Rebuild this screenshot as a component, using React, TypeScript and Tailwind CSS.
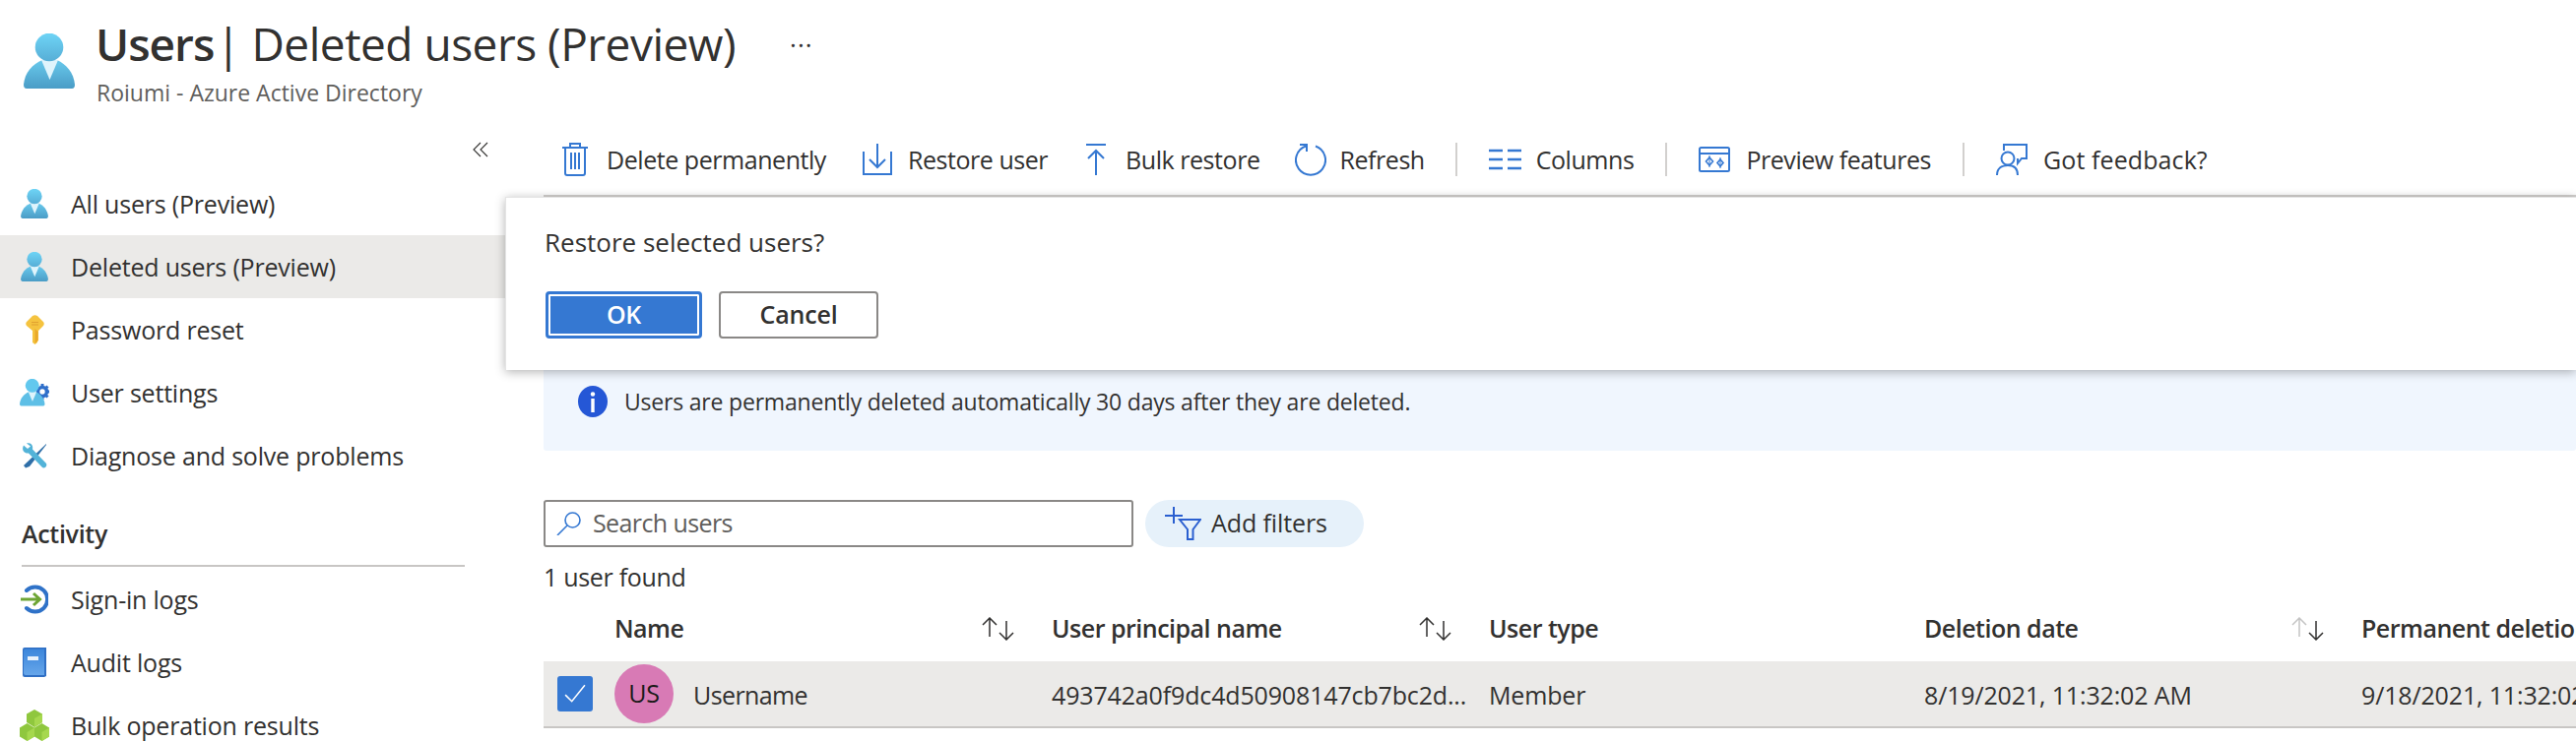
import type { ReactNode } from 'react';

const BLUE = '#3578d2';

function UserGlyph({ id, className }: { id: string; className: string }) {
  return (
    <svg viewBox="0 0 52 56" className={className}>
      <defs>
        <linearGradient id={`${id}-head`} x1="0" y1="0" x2="0" y2="1">
          <stop offset="0" stopColor="#6ed4f6" />
          <stop offset="1" stopColor="#57aed6" />
        </linearGradient>
        <linearGradient id={`${id}-body`} x1="0" y1="0" x2="0" y2="1">
          <stop offset="0" stopColor="#68c9ec" />
          <stop offset="1" stopColor="#4a9cc6" />
        </linearGradient>
      </defs>
      <path d="M3 56 Q0 56 0 52 C1 40 9 31 19 27 L34 27 C43 31 51 40 52 52 Q52 56 49 56Z" fill={`url(#${id}-body)`} />
      <path d="M18 27 L35 27 L26.5 47Z" fill="#dff4fc" />
      <circle cx="26" cy="14" r="14.3" fill={`url(#${id}-head)`} />
    </svg>
  );
}

function KeyIcon() {
  return (
    <svg viewBox="0 0 19 30" className="h-[30px] w-[19px]">
      <path d="M7 1 Q9.5 -0.5 12 1 L18 7 Q19.5 9 18 11 L13 16 L13 26 L12 27 L12 28 L9.5 30 L7 28 L7 16 L1 11 Q-0.5 9 1 7Z" fill="#f5c33f" />
      <path d="M9.5 14 L12.5 17 L12.5 26 L9.5 29Z" fill="#e9a82b" />
      <path d="M6 7.5 H13 M6 10 H13" stroke="#e0a030" strokeWidth="1.2" />
    </svg>
  );
}

function UserPaths() {
  return (
    <>
      <path d="M3 56 Q0 56 0 52 C1 40 9 31 19 27 L34 27 C43 31 51 40 52 52 Q52 56 49 56Z" fill="#5ebfe6" />
      <path d="M18 27 L35 27 L26.5 47Z" fill="#dff4fc" />
      <circle cx="26" cy="14" r="14.3" fill="#62c8ee" />
    </>
  );
}

function UserSettingsIcon() {
  return (
    <svg viewBox="0 0 30 28" className="h-[28px] w-[30px]">
      <circle cx="23" cy="13" r="4.5" fill="none" stroke="#2f6fca" strokeWidth="3.6" />
      <path d="M23 5 V7 M23 19 V21 M28.5 7.5 L27 9 M27 17 L28.5 18.5 M29 13 H30" stroke="#2f6fca" strokeWidth="3" />
      <g transform="scale(0.49)">
        <UserPaths />
      </g>
    </svg>
  );
}

function ToolsIcon() {
  return (
    <svg viewBox="0 0 26 26" className="h-[26px] w-[26px]">
      <path d="M25 1 L2 23 L4 25.5 L8 24 L25 2Z" fill="#2f6fa8" />
      <path d="M2 2.5 L6 6 L9 3.5 L5 0.5 C9 -0.5 12 2 11 6.5 L25 21 Q26 23.5 24 25 Q22 26 20.5 24.5 L7 10.5 C2.5 11 -0.5 7 2 2.5Z" fill="#53b3d8" />
    </svg>
  );
}

function SignInIcon() {
  return (
    <svg viewBox="0 0 28 30" className="h-[30px] w-[28px]">
      <path d="M6 6 A12.5 12.5 0 1 1 6 24" fill="none" stroke="#2f72c8" strokeWidth="4" strokeLinecap="round" />
      <path d="M0 15 H19 M13 9 L19.5 15 L13 21" fill="none" stroke="#6da534" strokeWidth="3" />
    </svg>
  );
}

function BookIcon() {
  return (
    <svg viewBox="0 0 24 30" className="h-[30px] w-[24px]">
      <defs>
        <linearGradient id="book" x1="0" y1="0" x2="0" y2="1">
          <stop offset="0" stopColor="#3c86db" />
          <stop offset="1" stopColor="#66a6ea" />
        </linearGradient>
      </defs>
      <path d="M2 0 H24 V29 L22 30 H2 Q0 30 0 28 V2 Q0 0 2 0Z" fill="#2f6fc4" />
      <path d="M3 1.5 H22 V28 H3 Q1 28 1 26 V3 Q1 1.5 3 1.5Z" fill="url(#book)" />
      <rect x="5" y="9" width="11" height="4" fill="#e8f1fb" />
    </svg>
  );
}

function CubesIcon() {
  return (
    <svg viewBox="0 0 30 32" className="h-[32px] w-[30px]">
      <path d="M15 0 L23 4.5 V13 L15 18 L7 13 V4.5Z" fill="#8fc73e" />
      <path d="M15 9 L23 4.5 V13 L15 18Z" fill="#a6d84e" />
      <path d="M7.5 14 L15 18.5 V27.5 L7.5 32 L0 27.5 V18.5Z" fill="#8fc73e" />
      <path d="M7.5 23 L15 18.5 V27.5 L7.5 32Z" fill="#a6d84e" />
      <path d="M22.5 14 L30 18.5 V27.5 L22.5 32 L15 27.5 V18.5Z" fill="#8fc73e" />
      <path d="M22.5 23 L30 18.5 V27.5 L22.5 32Z" fill="#a6d84e" />
    </svg>
  );
}

function TrashIcon() {
  return (
    <svg viewBox="0 0 26 34" className="h-[34px] w-[26px]" fill="none" stroke={BLUE} strokeWidth="2">
      <path d="M0 5 H26 M8 5 V1 H18 V5 M3 5 V31 Q3 33 5 33 H21 Q23 33 23 31 V5" />
      <path d="M9 10 V27 M13 10 V27 M17 10 V27" />
    </svg>
  );
}

function RestoreIcon() {
  return (
    <svg viewBox="0 0 30 32" className="h-[32px] w-[30px]" fill="none" stroke={BLUE} strokeWidth="2">
      <path d="M1 8 V31 H29 V8 M15 0 V24 M7 16 L15 24 L23 16" />
    </svg>
  );
}

function BulkIcon() {
  return (
    <svg viewBox="0 0 20 32" className="h-[32px] w-[20px]" fill="none" stroke={BLUE} strokeWidth="2">
      <path d="M0 1 H20 M10 32 V7 M2 15 L10 7 L18 15" />
    </svg>
  );
}

function RefreshIcon() {
  return (
    <svg viewBox="0 0 32 34" className="h-[34px] w-[32px]" fill="none" stroke={BLUE} strokeWidth="2">
      <path d="M11 3.5 A15 15 0 1 0 21 3.5" />
      <path d="M5 2 H12 V9" />
    </svg>
  );
}

function ColumnsIcon() {
  return (
    <svg viewBox="0 0 33 22" className="h-[22px] w-[33px]" fill="none" stroke={BLUE} strokeWidth="2.4">
      <path d="M0 2 H14 M19 2 H33 M0 11 H14 M19 11 H33 M0 20 H14 M19 20 H33" />
    </svg>
  );
}

function PreviewIcon() {
  return (
    <svg viewBox="0 0 32 26" className="h-[26px] w-[32px]" fill="none" stroke={BLUE} strokeWidth="2">
      <rect x="1" y="1" width="30" height="24" rx="1.5" />
      <path d="M1 7 H31" />
      <path d="M11 11 L14.5 15 L11 19 L7.5 15Z M22 13 L25 16.5 L22 20 L19 16.5Z" strokeWidth="1.6" />
      <path d="M11 9 V21 M22 11 V22" strokeWidth="1" />
    </svg>
  );
}

function FeedbackIcon() {
  return (
    <svg viewBox="0 0 32 32" className="h-[32px] w-[32px]" fill="none" stroke={BLUE} strokeWidth="2">
      <path d="M8 7 V1 H31 V15 H26 L22 20 V15" />
      <circle cx="12" cy="15" r="6.5" />
      <path d="M1 32 C1 25 6 22 12 22 C18 22 22 25 22 32" />
    </svg>
  );
}

function InfoIcon() {
  return (
    <svg viewBox="0 0 30 32" className="h-[32px] w-[30px]">
      <ellipse cx="15" cy="16" rx="15" ry="16" fill="#2557d6" />
      <circle cx="15" cy="8.5" r="2.2" fill="#fff" />
      <rect x="13.3" y="13" width="3.4" height="14" fill="#fff" />
    </svg>
  );
}

function SearchIcon() {
  return (
    <svg viewBox="0 0 26 24" className="h-[24px] w-[26px]" fill="none" stroke={BLUE} strokeWidth="1.6">
      <circle cx="16.5" cy="8.5" r="7.5" />
      <path d="M11 14 L1 24" />
    </svg>
  );
}

function AddFilterIcon() {
  return (
    <svg viewBox="0 0 37 34" className="h-[34px] w-[37px]" fill="none" stroke="#2a5fd0" strokeWidth="2">
      <path d="M9 0 V17 M0 9 H18" />
      <path d="M15 13 H36 L28.5 23 V33 H23 V23Z" />
    </svg>
  );
}

function SortArrows({ faded }: { faded?: boolean }) {
  return (
    <svg viewBox="0 0 33 24" className="h-[24px] w-[33px]" fill="none" stroke="#323130" strokeWidth="1.5">
      <path d="M8 1 V20 M1 8 L8 1 L15 8" stroke={faded ? '#c4c4c4' : '#323130'} />
      <path d="M25 4 V23 M18 16 L25 23 L32 16" />
    </svg>
  );
}

function NavItem({ icon, label, active }: { icon: ReactNode; label: string; active?: boolean }) {
  return (
    <div className={`flex h-[64px] items-center ${active ? 'bg-[#ebeae8]' : ''}`}>
      <span className="flex w-[72px] shrink-0 justify-center pr-[2px]">{icon}</span>
      <span className="whitespace-nowrap pt-[2px] tracking-[-0.2px]">{label}</span>
    </div>
  );
}

function ToolButton({ icon, label, gap, left }: { icon: ReactNode; label: string; gap: string; left: string }) {
  return (
    <div className={`flex items-center whitespace-nowrap ${left}`}>
      {icon}
      <span className={`pt-[2px] ${gap}`}>{label}</span>
    </div>
  );
}

function Separator({ left }: { left: string }) {
  return <div className={`h-[34px] w-[2px] bg-[#d2d0ce] ${left}`} />;
}

export default function App() {
  return (
    <div className="relative h-[754px] w-[2616px] overflow-hidden bg-white font-['Open_Sans',sans-serif] text-[25px] tracking-[-0.3px] text-[#323130]">
      {/* Page header */}
      <div className="flex h-[120px]">
        <div className="ml-[24px] mt-[34px]">
          <UserGlyph id="page" className="h-[56px] w-[52px]" />
        </div>
        <div className="ml-[22px] mt-[9px]">
          <div className="-ml-[1px] whitespace-nowrap text-[46px] leading-[70px] tracking-[-0.5px]">
            <span className="font-semibold tracking-[-1px] [word-spacing:-9px]">Users </span>| Deleted users (Preview)
          </div>
          <div className="mt-[1px] text-[23px] leading-[28px] tracking-normal text-[#605e5c]">Roiumi - Azure Active Directory</div>
        </div>
        <div className="ml-[55px] mt-[30px] text-[26px] leading-[30px] tracking-[1px]">···</div>
      </div>

      <div className="flex">
        {/* Sidebar */}
        <div className="w-[513px] shrink-0">
          <div className="flex h-[55px] justify-end pr-[17px] pt-[24px]">
            <svg viewBox="0 0 16 16" className="h-[16px] w-[16px]" fill="none" stroke="#323130" strokeWidth="1.1">
              <path d="M8 1 L1 8 L8 15 M15 1 L8 8 L15 15" />
            </svg>
          </div>
          <NavItem icon={<UserGlyph id="nav-all" className="h-[30px] w-[28px]" />} label="All users (Preview)" />
          <NavItem icon={<UserGlyph id="nav-del" className="h-[30px] w-[28px]" />} label="Deleted users (Preview)" active />
          <NavItem icon={<KeyIcon />} label="Password reset" />
          <NavItem icon={<UserSettingsIcon />} label="User settings" />
          <NavItem icon={<ToolsIcon />} label="Diagnose and solve problems" />
          <div className="ml-[22px] mr-[41px] mt-[27px] border-b-2 border-[#c8c6c4] pb-[12px] font-semibold leading-[40px]">Activity</div>
          <div className="mt-[1px]">
            <NavItem icon={<SignInIcon />} label="Sign-in logs" />
            <NavItem icon={<BookIcon />} label="Audit logs" />
            <NavItem icon={<CubesIcon />} label="Bulk operation results" />
          </div>
        </div>

        {/* Main content */}
        <div className="min-w-0 flex-1 pl-[39px]">
          <div className="flex h-[78px] items-center pt-[6px] tracking-[-0.45px]">
            <ToolButton icon={<TrashIcon />} label="Delete permanently" gap="ml-[19px]" left="ml-[19px]" />
            <ToolButton icon={<RestoreIcon />} label="Restore user" gap="ml-[16px]" left="ml-[37px]" />
            <ToolButton icon={<BulkIcon />} label="Bulk restore" gap="ml-[20px]" left="ml-[39px]" />
            <ToolButton icon={<RefreshIcon />} label="Refresh" gap="ml-[14px]" left="ml-[35px]" />
            <Separator left="ml-[31px]" />
            <ToolButton icon={<ColumnsIcon />} label="Columns" gap="ml-[15px]" left="ml-[32px]" />
            <Separator left="ml-[32px]" />
            <ToolButton icon={<PreviewIcon />} label="Preview features" gap="ml-[16px]" left="ml-[32px]" />
            <Separator left="ml-[32px]" />
            <ToolButton icon={<FeedbackIcon />} label="Got feedback?" gap="ml-[16px] tracking-[0.1px]" left="ml-[32px]" />
          </div>
          <div className="h-[4px] bg-[#d2d0ce]" />

          {/* Info banner, mostly behind the confirmation */}
          <div className="mt-[20px] flex h-[236px] items-end rounded-[3px] bg-[#f0f6fe] pb-[34px] pl-[35px]">
            <InfoIcon />
            <span className="ml-[17px] text-[23px] leading-[32px] tracking-[-0.2px]">Users are permanently deleted automatically 30 days after they are deleted.</span>
          </div>

          {/* Search and filters */}
          <div className="mt-[50px] flex h-[48px] gap-[12px]">
            <div className="flex w-[599px] items-center rounded-[3px] border-2 border-[#8a8886] pl-[11px] text-[#605e5c]">
              <SearchIcon />
              <span className="ml-[11px] tracking-[-0.6px]">Search users</span>
            </div>
            <div className="flex w-[222px] items-center rounded-full bg-[#e6f1fa] pl-[20px]">
              <AddFilterIcon />
              <span className="ml-[10px] tracking-[-0.1px]">Add filters</span>
            </div>
          </div>
          <div className="mt-[13px] leading-[34px]">1 user found</div>

          {/* Users table */}
          <div className="mt-[3px] grid h-[66px] grid-cols-[72px_444px_444px_442px_444px_1fr] items-center whitespace-nowrap font-semibold tracking-[-0.5px]">
            <div />
            <div className="flex items-center justify-between pr-[38px]">
              Name
              <SortArrows />
            </div>
            <div className="flex items-center justify-between pr-[38px]">
              User principal name
              <SortArrows />
            </div>
            <div>User type</div>
            <div className="flex items-center justify-between pr-[38px]">
              Deletion date
              <SortArrows faded />
            </div>
            <div>Permanent deletion date</div>
          </div>
          <div className="grid h-[68px] grid-cols-[72px_444px_444px_442px_444px_1fr] items-center whitespace-nowrap border-b-2 border-[#c8c6c4] bg-[#ebeae8] tracking-[-0.15px]">
            <div className="pl-[14px]">
              <div className="flex h-[36px] w-[36px] items-center justify-center rounded-[3px] bg-[#3578d2]">
                <svg viewBox="0 0 20 20" className="h-[22px] w-[22px]" fill="none" stroke="#fff" strokeWidth="1.4">
                  <path d="M1 11 L7 17 L19 2" />
                </svg>
              </div>
            </div>
            <div className="flex items-center">
              <div className="flex h-[60px] w-[60px] items-center justify-center rounded-full bg-[#d87ab5] text-[#1b1a19]">US</div>
              <span className="ml-[20px] pt-[3px] tracking-[-0.6px]">Username</span>
            </div>
            <div className="pt-[3px]">493742a0f9dc4d50908147cb7bc2d...</div>
            <div className="pt-[3px]">Member</div>
            <div className="pt-[3px]">8/19/2021, 11:32:02 AM</div>
            <div className="pt-[3px]">9/18/2021, 11:32:02 AM</div>
          </div>
        </div>
      </div>

      {/* Confirmation popup over the page */}
      <div className="absolute left-[513px] right-0 top-[200px] h-[176px] border-l border-t border-[#e4e4e4] bg-white pl-[39px] pt-[27px] shadow-[0_2px_10px_rgba(0,0,0,0.3)]">
        <div className="text-[26px] leading-[36px] tracking-normal">Restore selected users?</div>
        <div className="ml-[1px] mt-[32px] flex gap-[17px] font-semibold tracking-[-0.2px]">
          <button className="h-[48px] w-[159px] rounded-[4px] border-[3px] border-[#3578d2] bg-[#3578d2] text-white shadow-[inset_0_0_0_2px_#fff]">OK</button>
          <button className="h-[48px] w-[162px] rounded-[4px] border-2 border-[#8a8886] bg-white">Cancel</button>
        </div>
      </div>
    </div>
  );
}
